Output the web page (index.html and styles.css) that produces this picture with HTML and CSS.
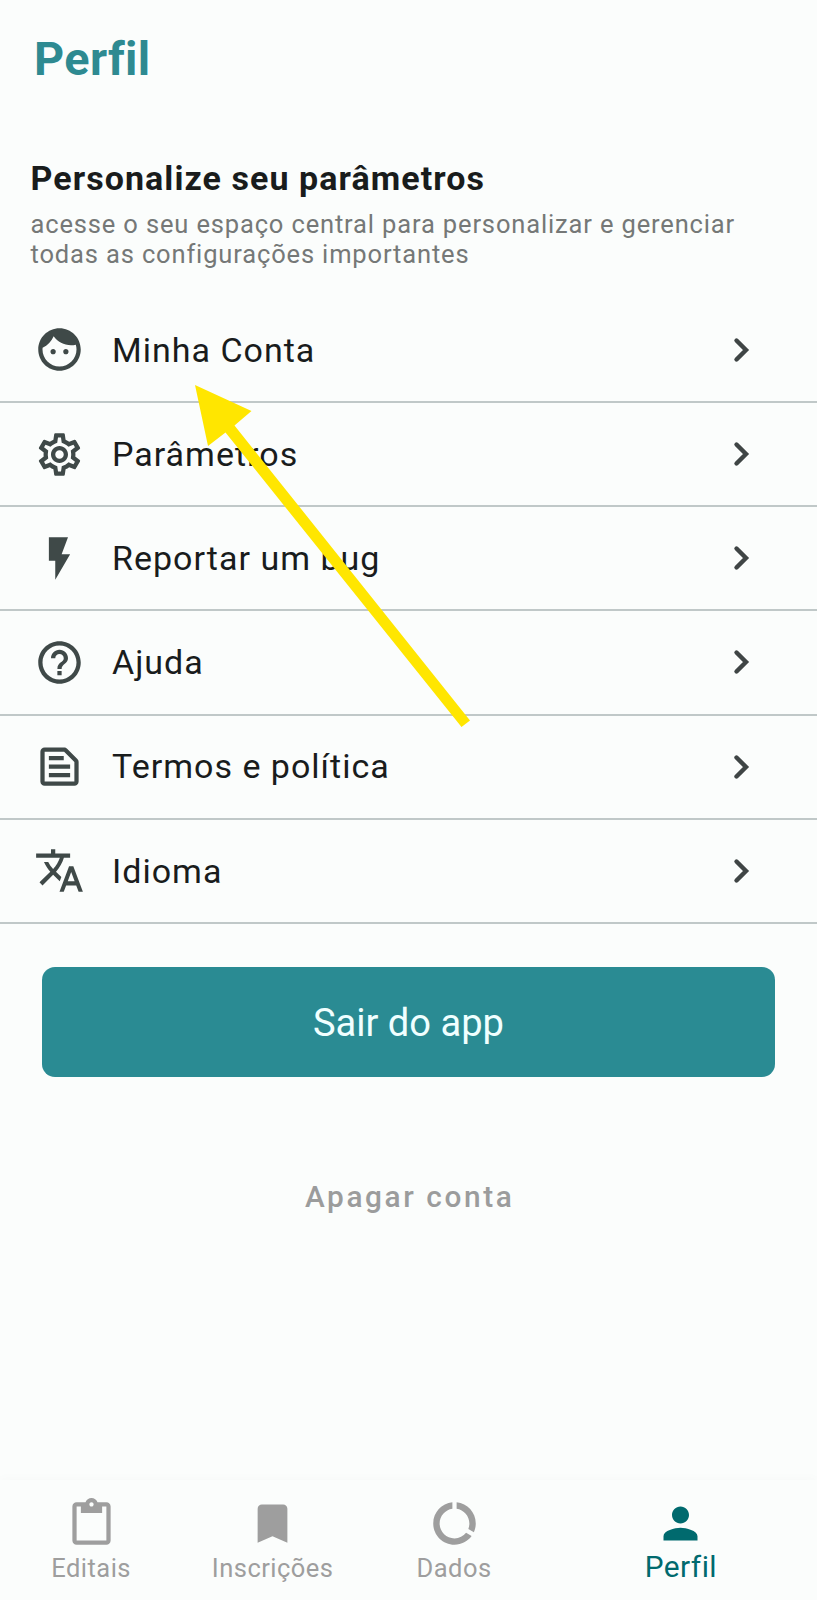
FILE: index.html
```html
<!DOCTYPE html>
<html lang="pt-BR">
<head>
<meta charset="utf-8">
<title>Perfil</title>
<link rel="stylesheet" href="styles.css">
</head>
<body>
<div class="app">
  <header class="topbar"><h1 class="title">Perfil</h1></header>
  <section class="intro">
    <h2 class="intro-title">Personalize seu parâmetros</h2>
    <p class="intro-text">acesse o seu espaço central para personalizar e gerenciar<br>todas as configurações importantes</p>
  </section>
  <main class="menu">
    <a class="row"><svg class="icon" viewBox="0 0 24 24"><path d="M9 11.75c-.69 0-1.25.56-1.25 1.25s.56 1.25 1.25 1.25 1.25-.56 1.25-1.25-.56-1.25-1.25-1.25zm6 0c-.69 0-1.25.56-1.25 1.25s.56 1.25 1.25 1.25 1.25-.56 1.25-1.25-.56-1.25-1.25-1.25zM12 2C6.48 2 2 6.48 2 12s4.48 10 10 10 10-4.48 10-10S17.52 2 12 2zm0 18c-4.41 0-8-3.59-8-8 0-.29.02-.58.05-.86 2.36-1.05 4.23-2.98 5.21-5.37C11.07 8.33 14.05 10 17.42 10c.78 0 1.53-.09 2.25-.26.21.71.33 1.47.33 2.26 0 4.41-3.59 8-8 8z"/></svg><span class="label">Minha Conta</span><svg class="chevron" viewBox="0 0 18 26"><path d="M3.500 3.500 13 13 3.500 22.500"/></svg></a>
    <a class="row"><svg class="icon" viewBox="0 0 24 24"><path d="M19.43 12.98c.04-.32.07-.64.07-.98 0-.34-.03-.66-.07-.98l2.11-1.65c.19-.15.24-.42.12-.64l-2-3.46c-.09-.16-.26-.25-.44-.25-.06 0-.12.01-.17.03l-2.49 1c-.52-.4-1.08-.73-1.69-.98l-.38-2.65C14.46 2.18 14.25 2 14 2h-4c-.25 0-.46.18-.49.42l-.38 2.65c-.61.25-1.17.59-1.69.98l-2.49-1c-.06-.02-.12-.03-.18-.03-.17 0-.34.09-.43.25l-2 3.46c-.13.22-.07.49.12.64l2.11 1.65c-.04.32-.07.65-.07.98 0 .33.03.66.07.98l-2.11 1.65c-.19.15-.24.42-.12.64l2 3.46c.09.16.26.25.44.25.06 0 .12-.01.17-.03l2.49-1c.52.4 1.08.73 1.69.98l.38 2.65c.03.24.24.42.49.42h4c.25 0 .46-.18.49-.42l.38-2.65c.61-.25 1.17-.59 1.69-.98l2.49 1c.06.02.12.03.18.03.17 0 .34-.09.43-.25l2-3.46c.12-.22.07-.49-.12-.64l-2.11-1.65zm-1.98-1.71c.04.31.05.52.05.73 0 .21-.02.43-.05.73l-.14 1.13.89.7 1.08.84-.7 1.21-1.27-.51-1.04-.42-.9.68c-.43.32-.84.56-1.25.73l-1.06.43-.16 1.13-.2 1.35h-1.4l-.19-1.35-.16-1.13-1.06-.43c-.43-.18-.83-.41-1.23-.71l-.91-.7-1.06.43-1.27.51-.7-1.21 1.08-.84.89-.7-.14-1.13c-.03-.31-.05-.54-.05-.74s.02-.43.05-.73l.14-1.13-.89-.7-1.08-.84.7-1.21 1.27.51 1.04.42.9-.68c.43-.32.84-.56 1.25-.73l1.06-.43.16-1.13.2-1.35h1.39l.19 1.35.16 1.13 1.06.43c.43.18.83.41 1.23.71l.91.7 1.06-.43 1.27-.51.7 1.21-1.07.85-.89.7.14 1.13zM12 8c-2.21 0-4 1.79-4 4s1.79 4 4 4 4-1.79 4-4-1.79-4-4-4zm0 6c-1.1 0-2-.9-2-2s.9-2 2-2 2 .9 2 2-.9 2-2 2z"/></svg><span class="label">Parâmetros</span><svg class="chevron" viewBox="0 0 18 26"><path d="M3.500 3.500 13 13 3.500 22.500"/></svg></a>
    <a class="row"><svg class="icon" viewBox="0 0 24 24"><path d="M7 2v11h3v9l7-12h-4l3-8z"/></svg><span class="label">Reportar um bug</span><svg class="chevron" viewBox="0 0 18 26"><path d="M3.500 3.500 13 13 3.500 22.500"/></svg></a>
    <a class="row"><svg class="icon" viewBox="0 0 24 24"><path d="M11 18h2v-2h-2v2zm1-16C6.48 2 2 6.48 2 12s4.48 10 10 10 10-4.48 10-10S17.52 2 12 2zm0 18c-4.41 0-8-3.59-8-8s3.59-8 8-8 8 3.59 8 8-3.59 8-8 8zm0-14c-2.21 0-4 1.79-4 4h2c0-1.1.9-2 2-2s2 .9 2 2c0 2-3 1.75-3 5h2c0-2.250 3-2.500 3-5 0-2.210-1.790-4-4-4z"/></svg><span class="label">Ajuda</span><svg class="chevron" viewBox="0 0 18 26"><path d="M3.500 3.500 13 13 3.500 22.500"/></svg></a>
    <a class="row"><svg class="icon" viewBox="0 0 24 24"><path d="M14.17 5L19 9.830V19H5V5h9.170m0-2H5c-1.100 0-2 .9-2 2v14c0 1.100.9 2 2 2h14c1.100 0 2-.9 2-2V9.830c0-.53-.21-1.040-.59-1.410l-4.830-4.830c-.37-.38-.88-.59-1.410-.59zM7 15h10v2H7v-2zm0-4h10v2H7v-2zm0-4h7v2H7V7z"/></svg><span class="label">Termos e política</span><svg class="chevron" viewBox="0 0 18 26"><path d="M3.500 3.500 13 13 3.500 22.500"/></svg></a>
    <a class="row"><svg class="icon" viewBox="0 0 24 24"><path d="M12.87 15.070l-2.540-2.510.03-.03c1.740-1.940 2.980-4.170 3.710-6.530H17V4h-7V2H8v2H1v1.990h11.170C11.500 7.920 10.440 9.750 9 11.350 8.070 10.320 7.300 9.190 6.690 8h-2c.73 1.630 1.730 3.170 2.980 4.560l-5.090 5.020L4 19l5-5 3.110 3.110.76-2.040zM18.500 10h-2L12 22h2l1.120-3h4.750L21 22h2l-4.500-12zm-2.620 7l1.620-4.330L19.120 17h-3.240z"/></svg><span class="label">Idioma</span><svg class="chevron" viewBox="0 0 18 26"><path d="M3.500 3.500 13 13 3.500 22.500"/></svg></a>
  </main>
  <div class="actions">
    <button class="logout">Sair do app</button>
    <button class="delete">Apagar conta</button>
  </div>
  <nav class="tabs">
    <a class="tab"><svg class="icon" viewBox="0 0 24 24"><path d="M19 2h-4.180C14.400.84 13.300 0 12 0c-1.300 0-2.400.84-2.820 2H5c-1.100 0-2 .9-2 2v16c0 1.100.9 2 2 2h14c1.100 0 2-.9 2-2V4c0-1.100-.9-2-2-2zm-7 0c.55 0 1 .45 1 1s-.45 1-1 1-1-.45-1-1 .45-1 1-1zm7 18H5V4h2v3h10V4h2v16z"/></svg><span class="tab-label">Editais</span></a>
    <a class="tab"><svg class="icon" viewBox="0 0 24 24"><path d="M17 3H7c-1.100 0-1.990.9-1.990 2L5 21l7-3 7 3V5c0-1.100-.9-2-2-2z"/></svg><span class="tab-label">Inscrições</span></a>
    <a class="tab"><svg class="icon" viewBox="0 0 24 24"><path d="M13 2.050v3.030c3.390.49 6 3.390 6 6.920 0 .9-.18 1.750-.48 2.540l2.600 1.530c.56-1.240.88-2.620.88-4.070 0-5.180-3.950-9.450-9-9.950zM12 19c-3.870 0-7-3.130-7-7 0-3.530 2.610-6.430 6-6.920V2.050c-5.060.5-9 4.760-9 9.950 0 5.520 4.470 10 9.990 10 3.310 0 6.240-1.610 8.060-4.090l-2.600-1.530C16.170 17.980 14.210 19 12 19z"/></svg><span class="tab-label">Dados</span></a>
    <a class="tab active"><svg class="icon" viewBox="0 0 24 24"><path d="M12 12c2.210 0 4-1.790 4-4s-1.790-4-4-4-4 1.790-4 4 1.790 4 4 4zm0 2c-2.670 0-8 1.340-8 4v2h16v-2c0-2.660-5.330-4-8-4z"/></svg><span class="tab-label">Perfil</span></a>
  </nav>
  <svg class="pointer" viewBox="195 385 275 342"><path d="M195 385 251.500 411 234.500 425.500 470 720.500 461.500 727 225.500 432.500 208 446z"/></svg>
</div>
</body>
</html>
```
FILE: styles.css
```css
* { box-sizing: border-box; }
body { margin: 0; background: #fbfdfc; font-family: Roboto, sans-serif; color: #191c1c; }
.app { position: relative; width: 817px; height: 1600px; display: flex; flex-direction: column; overflow: hidden; }
.topbar { height: 117px; padding: 32px 0 0 34px; }
.title { margin: 0; font-size: 46.800px; line-height: 55px; font-weight: 700; letter-spacing: 0.400px; color: #2e8a91; font-variant-ligatures: none; }
.intro { height: 181.800px; padding: 41px 0 0 30.500px; }
.intro-title { margin: 0; font-size: 34px; line-height: 40px; font-weight: 700; letter-spacing: 1.060px; white-space: nowrap; }
.intro-text { margin: 11px 0 0; font-size: 25.500px; line-height: 30px; letter-spacing: 0.850px; color: #757877; white-space: nowrap; }
.menu { display: flex; flex-direction: column; }
.row { display: flex; align-items: center; height: 104.200px; padding: 0 66.500px 0 34px; border-bottom: 2px solid #c0c8c8; }
.icon { width: 51px; height: 51px; flex: none; fill: #3f4948; }
.label { flex: 1; padding: 0 0 0.600px 27px; font-size: 34px; line-height: 48px; letter-spacing: 1px; }
.chevron { width: 18px; height: 26px; fill: none; stroke: #3f4545; stroke-width: 4.400; stroke-linecap: round; stroke-linejoin: miter; }
.actions { display: flex; flex-direction: column; padding: 43px 42.500px 0 42.400px; }
.logout, .delete { border: 0; padding: 0; font-family: inherit; }
.logout { height: 110px; padding-top: 2px; border-radius: 13px; background: #2a8b93; color: #f0ffff; font-size: 38.100px; }
.delete { margin-top: 90px; height: 60px; padding-left: 2.500px; background: none; color: #9b9c9c; font-size: 29.800px; font-weight: 500; letter-spacing: 2.600px; }
.tabs { display: grid; grid-template-columns: 1fr 1fr 1fr 1.500fr; height: 120px; margin-top: auto; padding: 17.600px 0 0 0.400px; background: #fbfdfc; box-shadow: 0 -2px 10px rgba(0, 0, 0, 0.02); }
.tab { display: flex; flex-direction: column; align-items: center; color: #9e9e9e; }
.tab .icon { fill: #9e9e9e; }
.tab-label { margin-top: 4.400px; font-size: 25.500px; line-height: 30px; letter-spacing: 0.450px; }
.active { color: #006a6e; }
.active .icon { fill: #006a6e; }
.active .tab-label { margin-top: 3px; font-size: 29.800px; }
.pointer { position: absolute; left: 195px; top: 385px; width: 275px; height: 342px; fill: #ffe600; }
```
